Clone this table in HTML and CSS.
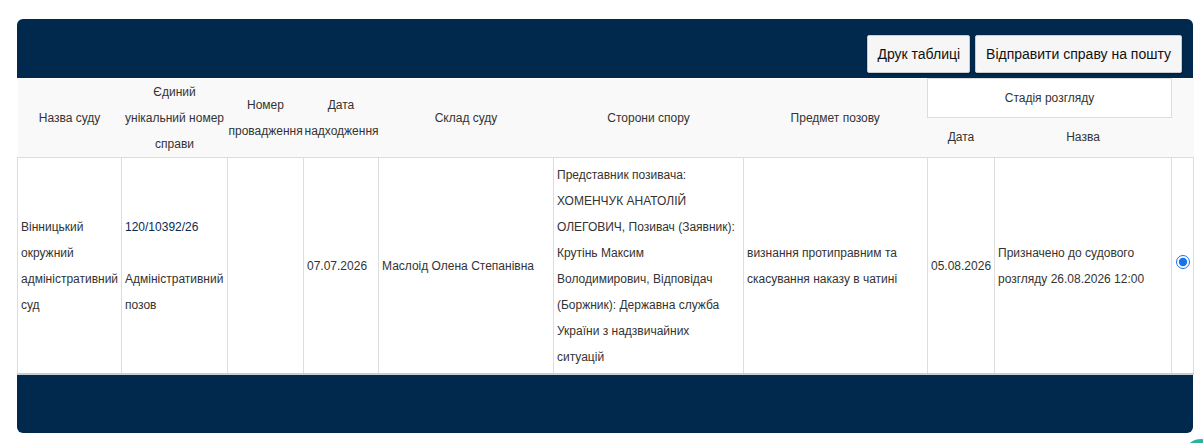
FILE: index.html
```html
<!DOCTYPE html>
<html lang="uk">
<head>
<meta charset="utf-8">
<title>Справи</title>
<link rel="stylesheet" href="styles.css">
</head>
<body>
<div class="page">
  <div class="panel">
    <div class="toolbar">
      <button class="btn" type="button">Друк таблиці</button>
      <button class="btn" type="button">Відправити справу на пошту</button>
    </div>
    <table class="cases">
      <colgroup>
        <col class="w-court"><col class="w-num"><col class="w-proc"><col class="w-date">
        <col class="w-judges"><col class="w-sides"><col class="w-subject"><col class="w-sdate">
        <col class="w-sname"><col class="w-radio">
      </colgroup>
      <thead>
        <tr class="hr1">
          <th rowspan="2">Назва суду</th>
          <th rowspan="2">Єдиний унікальний номер справи</th>
          <th rowspan="2">Номер провадження</th>
          <th rowspan="2">Дата надходження</th>
          <th rowspan="2">Склад суду</th>
          <th rowspan="2">Сторони спору</th>
          <th rowspan="2">Предмет позову</th>
          <th colspan="2" class="stage">Стадія розгляду</th>
          <th rowspan="2"></th>
        </tr>
        <tr class="hr2">
          <th>Дата</th>
          <th>Назва</th>
        </tr>
      </thead>
      <tbody>
        <tr>
          <td>Вінницький окружний адміністративний суд</td>
          <td><span class="case-no">120/10392/26</span><br><br>Адміністративний позов</td>
          <td></td>
          <td>07.07.2026</td>
          <td>Маслоід Олена Степанівна</td>
          <td>Представник позивача: ХОМЕНЧУК АНАТОЛІЙ ОЛЕГОВИЧ, Позивач (Заявник): Крутінь Максим Володимирович, Відповідач (Боржник): Державна служба України з надзвичайних ситуацій</td>
          <td>визнання протиправним та скасування наказу в чатині</td>
          <td>05.08.2026</td>
          <td>Призначено до судового розгляду 26.08.2026 12:00</td>
          <td class="radio-cell"><input type="radio" name="case" checked></td>
        </tr>
      </tbody>
    </table>
    <div class="footer"></div>
  </div>
</div>
<div class="fab"></div>
</body>
</html>
```

FILE: styles.css
```css
* { box-sizing: border-box; }
html, body { margin: 0; padding: 0; background: #fff; }
body {
  font-family: "Liberation Sans", Arial, Helvetica, sans-serif;
  color: #333;
  overflow: hidden;
}
.page { padding: 19px 10px 10px 17px; }
.panel { width: 1176px; }
.toolbar {
  background: #01284d;
  border-radius: 6px 6px 0 0;
  height: 59px;
  padding: 16px 11px 5px;
  display: flex;
  justify-content: flex-end;
  gap: 5px;
}
.btn {
  height: 38px;
  padding: 0 9px;
  font-family: "Liberation Sans", Arial, sans-serif;
  font-size: 14px;
  color: #111;
  background: #f6f6f6;
  border: 1px solid #c8ccd0;
  border-radius: 2px;
  box-shadow: 0 1px 2px rgba(0,0,0,0.3);
}
.btn + .btn { padding: 0 10px; }
.cases {
  width: 1176px;
  table-layout: fixed;
  border-collapse: collapse;
  font-size: 12px;
  line-height: 26px;
}
.w-court { width: 104px; }
.w-num { width: 106px; }
.w-proc { width: 76px; }
.w-date { width: 75px; }
.w-judges { width: 175px; }
.w-sides { width: 190px; }
.w-subject { width: 184px; }
.w-sdate { width: 67px; }
.w-sname { width: 177px; }
.w-radio { width: 22px; }
.cases thead th {
  background: #f9f9f9;
  font-weight: normal;
  color: #333;
  text-align: center;
  vertical-align: middle;
  padding: 0 1px;
}
.cases thead tr.hr1 { height: 39px; }
.cases thead tr.hr2 { height: 39px; }
.cases thead tr.hr2 th { border-bottom: 1px solid #ddd; }
.cases thead tr.hr1 th[rowspan] { border-bottom: 1px solid #ddd; }
.cases thead th.stage {
  background: #fff;
  border: 1px solid #ddd;
}
.cases tbody td {
  border-left: 1px solid #ddd;
  border-right: 1px solid #ddd;
  border-bottom: 2px solid #c9cdd1;
  padding: 4px 5px 3px 3px;
  vertical-align: middle;
  color: #333;
}
.case-no { color: #0b2a52; }
.radio-cell { text-align: center; padding: 0 !important; }
.radio-cell input { margin: 0; width: 14px; height: 14px; accent-color: #1a73e8; }
.footer {
  background: #01284d;
  height: 58px;
  border-radius: 0 0 6px 6px;
}
.fab {
  position: fixed;
  right: -12px;
  bottom: -16px;
  width: 28px;
  height: 20px;
  border-radius: 50%;
  background: #2bb3a0;
}
```
